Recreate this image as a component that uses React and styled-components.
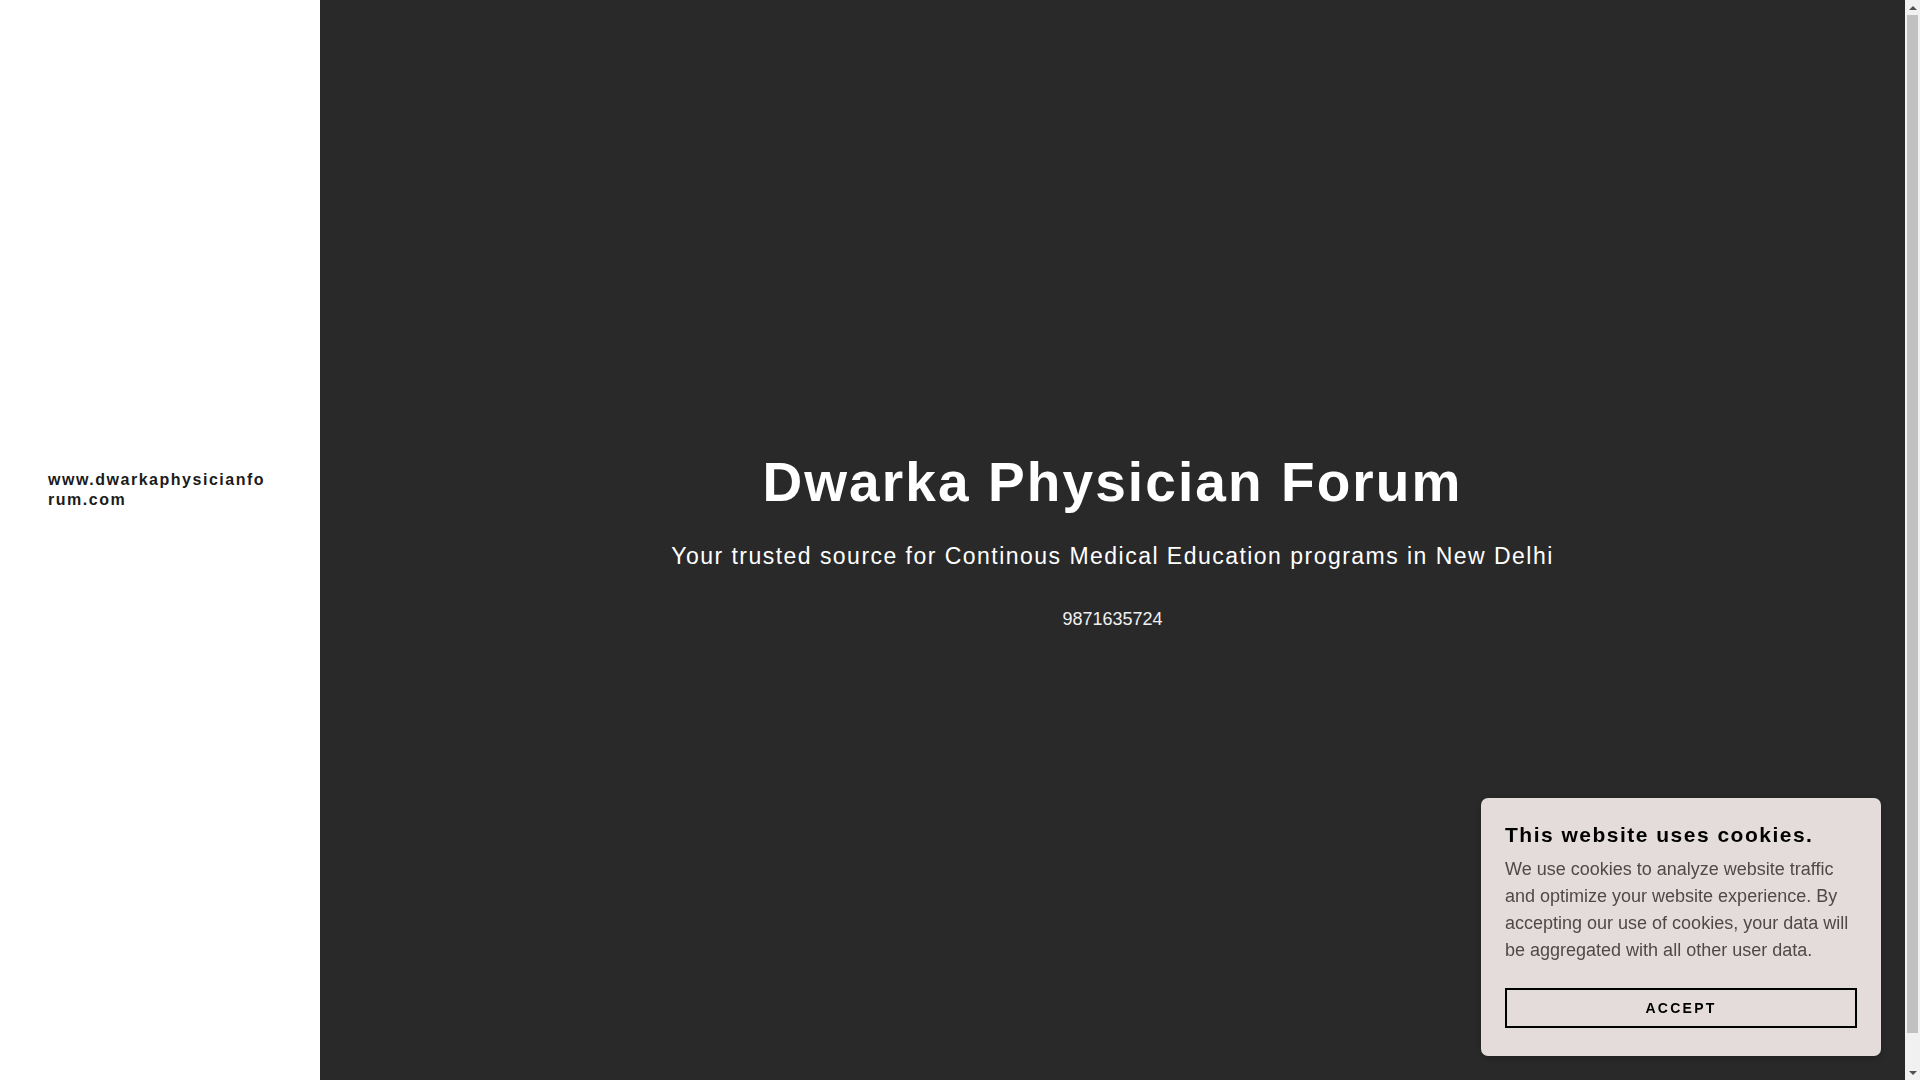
import React from "react"
import styled, { createGlobalStyle } from "styled-components"

const GlobalStyle = createGlobalStyle`
  html, body {
    margin: 0;
    padding: 0;
  }
  body {
    font-family: "Liberation Sans", Arial, sans-serif;
    background-color: #292929;
    overflow: hidden;
  }
  * {
    box-sizing: border-box;
  }
`

const Page = styled.div`
  display: flex;
  min-height: 1080px;
  margin-right: 15px;
`

const Sidebar = styled.aside`
  flex: 0 0 320px;
  background-color: #ffffff;
  padding: 470px 54px 0 48px;
`

const SiteName = styled.a`
  display: block;
  color: #1b1b1b;
  font-size: 16px;
  font-weight: 700;
  line-height: 1.25;
  letter-spacing: 0.095em;
  text-decoration: none;
  word-break: break-all;
`

const Hero = styled.main`
  flex: 1;
  background-color: #292929;
  display: flex;
  flex-direction: column;
  align-items: center;
  padding-top: 448px;
  text-align: center;
`

const Title = styled.h1`
  margin: 0;
  color: #ffffff;
  font-size: 55px;
  font-weight: 700;
  line-height: 1.25;
  letter-spacing: 0.038em;
`

const Tagline = styled.p`
  margin: 22px 0 0;
  color: #ffffff;
  font-size: 23px;
  line-height: 1.5;
  letter-spacing: 0.064em;
`

const Phone = styled.p`
  margin: 33px 0 0;
  color: #f0f0f0;
  font-size: 18px;
  line-height: 1.5;
`

const CookieBanner = styled.div`
  position: fixed;
  right: 39px;
  bottom: 24px;
  width: 400px;
  padding: 24px 24px 28px;
  background-color: #e4dcdb;
  border-radius: 7px;
  box-shadow: 0 2px 6px rgba(0, 0, 0, 0.2);
`

const CookieTitle = styled.h4`
  margin: 0;
  color: #000000;
  font-size: 21px;
  font-weight: 700;
  line-height: 1.25;
  letter-spacing: 0.071em;
`

const CookieText = styled.p`
  margin: 8px 0 0;
  color: #4f4949;
  font-size: 18px;
  line-height: 1.5;
`

const AcceptButton = styled.button`
  display: block;
  width: 100%;
  height: 40px;
  margin-top: 24px;
  background: transparent;
  border: 2px solid #000000;
  color: #000000;
  font-family: "Liberation Sans", Arial, sans-serif;
  font-size: 14px;
  font-weight: 700;
  letter-spacing: 0.16em;
  text-transform: uppercase;
  cursor: pointer;
`

/* the browser scrollbar seen at the right edge of the window */
const ScrollTrack = styled.div`
  position: fixed;
  top: 0;
  right: 0;
  width: 15px;
  height: 100vh;
  background-color: #f1f1f1;
  display: flex;
  flex-direction: column;
  align-items: center;
`

const ScrollArrow = styled.div`
  flex: 0 0 15px;
  display: flex;
  align-items: center;
  justify-content: center;

  &::before {
    content: "";
    width: 0;
    height: 0;
    border-left: 4px solid transparent;
    border-right: 4px solid transparent;
    ${(p) =>
      p.$down
        ? "border-top: 4px solid #505050;"
        : "border-bottom: 4px solid #505050;"}
  }
`

const ScrollThumb = styled.div`
  width: 11px;
  height: 1018px;
  background-color: #c1c1c1;
`

const ScrollSpacer = styled.div`
  flex: 1;
`

export default function App() {
  return (
    <>
      <GlobalStyle />
      <Page>
        <Sidebar>
          <SiteName href="#">www.dwarkaphysicianforum.com</SiteName>
        </Sidebar>
        <Hero>
          <Title>Dwarka Physician Forum</Title>
          <Tagline>
            Your trusted source for Continous Medical Education programs in New Delhi
          </Tagline>
          <Phone>9871635724</Phone>
        </Hero>
      </Page>
      <CookieBanner>
        <CookieTitle>This website uses cookies.</CookieTitle>
        <CookieText>
          We use cookies to analyze website traffic and optimize your website
          experience. By accepting our use of cookies, your data will be
          aggregated with all other user data.
        </CookieText>
        <AcceptButton>Accept</AcceptButton>
      </CookieBanner>
      <ScrollTrack>
        <ScrollArrow />
        <ScrollThumb />
        <ScrollSpacer />
        <ScrollArrow $down />
      </ScrollTrack>
    </>
  )
}
